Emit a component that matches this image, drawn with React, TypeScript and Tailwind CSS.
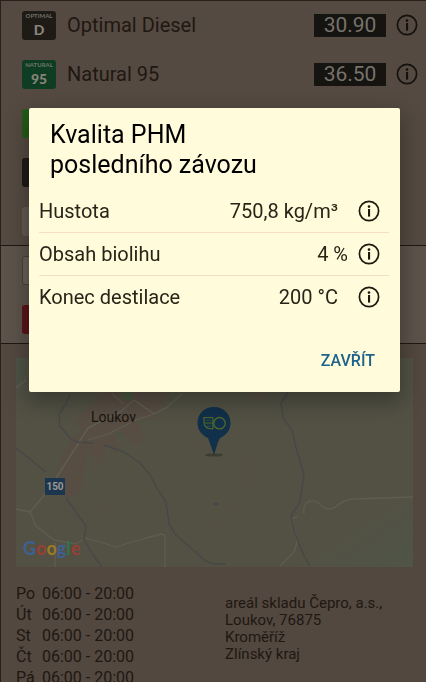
import React from "react";

function InfoIcon({ className }: { className: string }) {
  return (
    <svg viewBox="0 0 22 22" className={className} fill="none" aria-hidden="true">
      <circle cx="11" cy="11" r="9.6" stroke="currentColor" strokeWidth="1.7" />
      <circle cx="11" cy="6.6" r="1.3" fill="currentColor" />
      <rect x="10" y="9" width="2.1" height="7.6" fill="currentColor" />
    </svg>
  );
}

function FuelBadge({ kind, mark, className }: { kind?: string; mark?: string; className: string }) {
  return (
    <span
      className={`flex h-[29px] w-[34px] shrink-0 flex-col items-center overflow-hidden rounded-[3px] font-[Lato,sans-serif] font-bold text-[#88837a] ${className}`}
    >
      <span className="pt-px text-[6px] leading-[8px] opacity-80">{kind}</span>
      <span className="text-[14px] leading-[20px] font-black">{mark}</span>
    </span>
  );
}

function FuelRow({ name, price, kind, mark, tone }: { name: string; price: string; kind: string; mark: string; tone: string }) {
  return (
    <li className="flex h-12 items-center pr-2 pl-[21px]">
      <FuelBadge kind={kind} mark={mark} className={tone} />
      <span className="ml-[11px] flex-1 text-[20px] leading-6">{name}</span>
      <span className="flex h-[23px] w-[72px] items-center justify-center bg-[#151411] text-[21px] leading-[23px] text-[#77736b]">
        {price}
      </span>
      <button type="button" aria-label={`Informace: ${name}`} className="ml-[10px] text-[#14110e]">
        <InfoIcon className="size-[22px]" />
      </button>
    </li>
  );
}

function StationMap() {
  return (
    <div className="relative h-[209px] overflow-hidden bg-[#525144]">
      <svg viewBox="0 0 397 209" preserveAspectRatio="xMinYMin slice" className="h-full w-full" fill="none" aria-hidden="true">
        <defs>
          <linearGradient id="meadow" x1="0" y1="0" x2="1" y2="1">
            <stop offset="0.5" stopColor="#4f5548" stopOpacity="0" />
            <stop offset="1" stopColor="#4f5548" />
          </linearGradient>
        </defs>
        <path d="M0 0H12L8 22L0 30Z" fill="#4d5345" />
        <path d="M280 130H397V209H280Z" fill="url(#meadow)" />
        <path d="M94 22L142 22L150 38L138 60L120 60L128 82L118 88L108 76L96 72L104 92L100 96L90 84L86 108L78 100L68 88L70 104L64 134L52 140L42 132L44 104L54 84L66 74L60 64L80 42Z" fill="#574d43" />
        <path d="M94 22L160 22L148 44L130 50L110 42Z" fill="#574d43" />
        <path d="M246 16L270 20L244 44L232 40Z" fill="#564e43" />
        <path d="M107 34H116V42H107ZM100 76L106 74L104 80Z" fill="#48563f" />
        <g stroke="#605c50" strokeWidth="1.6" strokeLinejoin="round">
          <path d="M0 30L10 22M166 36L150 50L138 56L118 42L104 54L72 70L62 86L44 114L26 140L14 154L0 151" />
          <path d="M14 154L20 168L38 182L60 186L70 180L100 189L130 180L146 176L149 178L149 209M39 184V209" strokeWidth="1.3" />
          <path d="M72 82L92 76L120 62L138 56M96 36L108 46" strokeWidth="1.2" />
          <path d="M288 156C287 148 290 143 296 143C305 142 304 152 314 151C322 150 324 141 338 141L397 139" strokeWidth="1.3" />
          <path d="M282 158L276 161L281 184L278 194L264 208" strokeWidth="1.3" />
        </g>
        <g stroke="#474846" strokeWidth="1.4" strokeLinejoin="round">
          <path d="M54 36L50 46L43 56L44 68L54 80L60 84L78 85M88 87L110 95L124 105L134 117L142 132L150 144L153 166L160 177L176 191L188 202L197 206" />
          <path d="M0 90L30 114M50 140L70 168L68 182L78 198L86 209" />
          <path d="M269 22L271 36L265 45L267 60L276 72L280 90L288 116L284 144L275 158L279 176L288 198L294 208" />
          <path d="M197 206H210" />
        </g>
        <path d="M243 92L216 148L202 170M190 78L146 124M92 142L70 166" stroke="#584f43" />
        <path d="M198 145H202V147H198Z" fill="#3e4652" />
      </svg>
      <span className="absolute top-[50px] left-[75px] text-[14px] leading-[18px] text-[#17140e]">Loukov</span>
      <span className="absolute top-[120px] left-[29px] flex h-[17px] w-5 items-center justify-center bg-[#1c3650] text-[10px] font-bold text-[#9b9a90]">
        150
      </span>
      <svg viewBox="0 0 36 54" className="absolute top-[47px] left-[180px] h-[54px] w-9" fill="none" aria-hidden="true">
        <ellipse cx="18" cy="50" rx="9" ry="1.600" fill="#3d3c32" />
        <path d="M18 2C8 2 1.500 9 1.500 18C1.500 25 6 30.500 12 33C14 38 16 44 18 50C20 44 21 38 24 33C30 30.500 34.500 25 34.500 18C34.500 9 28 2 18 2Z" fill="#11304a" />
        <path d="M17 12.500H8V17C8 22 11 24 17 24M9 18H17M17 12.500V24" stroke="#52672b" strokeWidth="1.2" />
        <path d="M10 15H15M11 21H15" stroke="#245036" />
        <circle cx="23.500" cy="18.200" r="5.700" stroke="#52672b" strokeWidth="1.3" />
      </svg>
      <span className="absolute bottom-[7px] left-[7px] flex font-[Lato,sans-serif] text-[18px] leading-6 font-bold">
        <span className="text-[#3f6093]">G</span>
        <span className="text-[#9b3d34]">o</span>
        <span className="text-[#9c7a22]">o</span>
        <span className="text-[#3f6093]">g</span>
        <span className="text-[#307645]">l</span>
        <span className="text-[#9b3d34]">e</span>
      </span>
    </div>
  );
}

const days = ["Po", "Út", "St", "Čt", "Pá"];

const quality = [
  { label: "Hustota", value: "750,8 kg/m³", pad: "pr-[10px]" },
  { label: "Obsah biolihu", value: "4 %", pad: "" },
  { label: "Konec destilace", value: "200 °C", pad: "pr-[10px]" },
];

function QualityDialog() {
  return (
    <div className="fixed inset-0 flex items-start pt-[108px] pr-[26px] pl-[29px]">
      <section
        role="dialog"
        aria-modal="true"
        aria-labelledby="quality-title"
        className="w-full rounded-[2px] bg-[#fffbdb] shadow-[0_8px_22px_2px_rgba(0,0,0,0.3)]"
      >
        <h2 id="quality-title" className="w-[260px] pt-3 pl-[21px] text-[25px] leading-[30px] text-black">
          Kvalita PHM posledního závozu
        </h2>
        <dl className="mt-[10px] mr-[11px] ml-[10px] divide-y divide-[#f7dfc3] text-[20px] text-[#292417]">
          {quality.map((item) => (
            <div key={item.label} className="box-content flex h-[42px] items-center">
              <dt className="flex-1">{item.label}</dt>
              <dd className="flex items-center gap-[10px] pr-[9px]">
                <span className={item.pad}>{item.value}</span>
                <button type="button" aria-label={`Informace: ${item.label}`} className="text-[#1c190e]">
                  <InfoIcon className="size-[22px]" />
                </button>
              </dd>
            </div>
          ))}
        </dl>
        <div className="flex justify-end pt-[25px] pr-[17px] pb-[13px]">
          <button type="button" className="h-9 px-2 text-[16px] font-medium text-[#1d638c]">
            ZAVŘÍT
          </button>
        </div>
      </section>
    </div>
  );
}

export default function App() {
  return (
    <div className="h-screen overflow-hidden bg-[#52483f] font-[Roboto,sans-serif] text-[#211712]">
      <main className="border-l border-[#2a1f1b]">
        <ul className="flex flex-col gap-px border-t border-[#2a1f1b] bg-[#544a41]">
          <FuelRow name="Optimal Diesel" price="30.90" kind="OPTIMAL" mark="D" tone="bg-[#1e1b17]" />
          <FuelRow name="Natural 95" price="36.50" kind="NATURAL" mark="95" tone="bg-[#0e3d24]" />
          <li className="flex h-12 items-center pl-[21px]"><FuelBadge className="bg-[#245b19]" /></li>
          <li className="flex h-12 items-center pl-[21px]"><FuelBadge className="bg-[#1e1b17]" /></li>
          <li className="flex h-12 items-center pl-[21px]"><FuelBadge className="bg-[#625b53]" /></li>
        </ul>
        <ul className="flex flex-col gap-px border-t border-[#211712] bg-[#5c534a]">
          <li className="flex h-12 items-center pl-[21px]"><FuelBadge className="border border-[#494139] bg-[#666057]" /></li>
          <li className="flex h-12 items-center pl-[21px]"><FuelBadge className="bg-[#57151a]" /></li>
        </ul>
        <section className="border-t border-[#211712] pt-[14px] pr-[13px] pl-[15px]">
          <StationMap />
          <div className="flex pt-4">
            <table className="text-left text-[16px] leading-[21px]">
              <tbody>
                {days.map((day) => (
                  <tr key={day}>
                    <th scope="row" className="w-[26px] p-0 font-normal">{day}</th>
                    <td className="w-[183px] p-0">06:00 - 20:00</td>
                  </tr>
                ))}
              </tbody>
            </table>
            <address className="flex-1 pt-3 text-[15px] leading-[17px] not-italic">
              areál skladu Čepro, a.s.,<br />
              Loukov, 76875<br />
              Kroměříž<br />
              Zlínský kraj
            </address>
          </div>
        </section>
      </main>
      <QualityDialog />
    </div>
  );
}
